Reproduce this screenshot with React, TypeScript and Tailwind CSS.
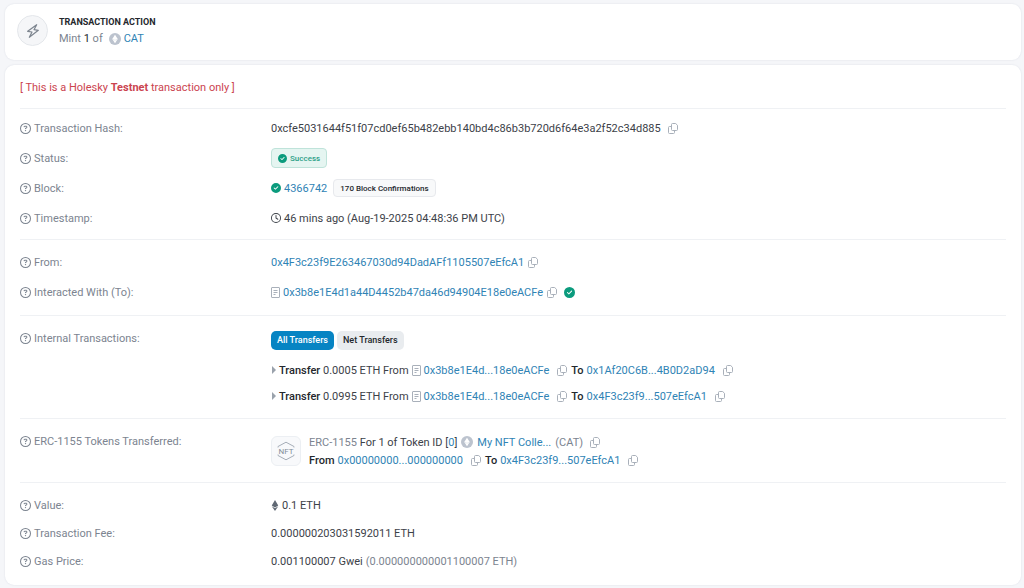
import type { ReactNode } from 'react'
import { FaCircleCheck, FaEthereum, FaRegCircleQuestion, FaRegClock } from 'react-icons/fa6'

const contract = '0x3b8e1E4d...18e0eACFe'

const transfers = [
  { amount: '0.0005 ETH', to: '0x1Af20C6B...4B0D2aD94' },
  { amount: '0.0995 ETH', to: '0x4F3c23f9...507eEfcA1' },
]

function Link({ children }: { children: ReactNode }) {
  return (
    <a href="#" className="text-[#2f83b5] hover:underline">
      {children}
    </a>
  )
}

function CopyButton() {
  return (
    <button type="button" aria-label="Copy" className="shrink-0 text-[#a9b0ba]">
      <svg viewBox="0 0 10 11" className="h-[11px] w-[10px]" fill="none" stroke="currentColor">
        <path d="M4.500.5h3.200l1.800 1.800v4.200a1 1 0 0 1-1 1h-4a1 1 0 0 1-1-1v-5a1 1 0 0 1 1-1z" />
        <path d="M3.500 3.500h-2a1 1 0 0 0-1 1v5a1 1 0 0 0 1 1h4a1 1 0 0 0 1-1v-2" />
      </svg>
    </button>
  )
}

function ContractIcon() {
  return (
    <svg viewBox="0 0 9 11" className="h-[11px] w-[9px] shrink-0 text-[#a9b0ba]" fill="none" stroke="currentColor">
      <rect x=".5" y=".5" width="8" height="10" rx=".5" />
      <path d="M2.500 3.500h4M2.500 5.500h4M2.500 7.500h2" />
    </svg>
  )
}

function TokenIcon() {
  return (
    <svg viewBox="0 0 24 24" className="size-3 shrink-0">
      <circle cx="12" cy="12" r="12" fill="#bcc3ce" />
      <path d="M12 3.500 17.500 12 12 20.500 6.500 12z" fill="#fff" />
      <path d="M6.500 12 12 14.500 17.500 12" fill="none" stroke="#d5dae1" strokeWidth="1" />
    </svg>
  )
}

function Group({ className, children }: { className: string; children: ReactNode }) {
  return <dl className={`border-t border-[#eff1f4] ${className}`}>{children}</dl>
}

function Row({ label, height, children }: { label: string; height: string; children: ReactNode }) {
  return (
    <div className="grid grid-cols-[minmax(0,1fr)_minmax(0,3fr)] gap-x-1.5">
      <dt className={`flex items-center gap-[3px] text-[#7c8490] ${height}`}>
        <FaRegCircleQuestion className="size-[11px] shrink-0" />
        {label}
      </dt>
      <dd className="flex min-w-0 flex-col">{children}</dd>
    </div>
  )
}

export default function App() {
  return (
    <main className="min-h-screen bg-[#f5f6f9] pt-1 pr-[3px] pb-[3px] pl-[5px] font-[Roboto,sans-serif] text-[11px] leading-[17px] text-[#3c4148]">
      <section className="mb-[5px] flex items-center gap-[11px] rounded-[9px] bg-white px-3 pt-[10px] pb-[13px] shadow-[0_0_2px_rgba(30,50,90,0.12)]">
        <div className="flex size-[31px] items-center justify-center rounded-full border border-[#e4e7eb] bg-[#f5f6f8]">
          <svg viewBox="0 0 24 24" className="size-4" fill="none" stroke="#7d858f" strokeWidth="1.8" strokeLinejoin="round">
            <path d="M17.500 2.500 4 12.500l6.500 1L6.500 21.500l13.500-10.500-6.500-1z" />
          </svg>
        </div>
        <div>
          <h1 className="text-[9px] font-bold text-[#24282d]">TRANSACTION ACTION</h1>
          <p className="flex items-center leading-4 text-[#7c8490]">
            <span className="mr-[6px]">
              Mint <span className="text-[#24282d]">1</span> of
            </span>
            <TokenIcon />
            <span className="ml-[3px]">
              <Link>CAT</Link>
            </span>
          </p>
        </div>
      </section>

      <section className="rounded-[9px] bg-white pr-[15px] pb-[10px] pl-[15px] shadow-[0_0_2px_rgba(30,50,90,0.12)]">
        <p className="pt-[14px] pb-3 text-[#cb444f]">
          [ This is a Holesky <strong className="font-bold">Testnet</strong> transaction only ]
        </p>

        <Group className="pt-1 pb-1.5">
          <Row label="Transaction Hash:" height="h-[30px]">
            <div className="flex h-[30px] items-center gap-[7px]">
              0xcfe5031644f51f07cd0ef65b482ebb140bd4c86b3b720d6f64e3a2f52c34d885
              <CopyButton />
            </div>
          </Row>
          <Row label="Status:" height="h-[30px]">
            <div className="flex h-[30px] items-center">
              <span className="flex h-5 items-center gap-[3px] rounded border border-[#bfe3da] bg-[#e5f5f1] px-1.5 text-[8px] font-medium text-[#2ba087]">
                <FaCircleCheck className="size-[9px] text-[#0b9b7d]" />
                Success
              </span>
            </div>
          </Row>
          <Row label="Block:" height="h-[30px]">
            <div className="flex h-[30px] items-center gap-[3px]">
              <FaCircleCheck className="size-[10px] text-[#0b9b7d]" />
              <Link>4366742</Link>
              <span className="ml-[3px] flex h-[18px] items-center rounded border border-[#e7e9ed] bg-[#f8f9fa] px-1.5 text-[8px] font-medium text-[#24282d]">
                170 Block Confirmations
              </span>
            </div>
          </Row>
          <Row label="Timestamp:" height="h-[30px]">
            <div className="flex h-[30px] items-center gap-[3px]">
              <FaRegClock className="size-[10px]" />
              46 mins ago (Aug-19-2025 04:48:36 PM UTC)
            </div>
          </Row>
        </Group>

        <Group className="pt-[7px] pb-2">
          <Row label="From:" height="h-[30px]">
            <div className="flex h-[30px] items-center gap-1">
              <Link>0x4F3c23f9E263467030d94DadAFf1105507eEfcA1</Link>
              <CopyButton />
            </div>
          </Row>
          <Row label="Interacted With (To):" height="h-[30px]">
            <div className="flex h-[30px] items-center gap-[3px]">
              <ContractIcon />
              <Link>0x3b8e1E4d1a44D4452b47da46d94904E18e0eACFe</Link>
              <span className="ml-px flex items-center gap-[7px]">
                <CopyButton />
                <FaCircleCheck className="size-[11px] text-[#0b9b7d]" />
              </span>
            </div>
          </Row>
        </Group>

        <Group className="pt-[7px] pb-[9px]">
          <Row label="Internal Transactions:" height="h-[30px]">
            <div className="mt-2 mb-[7px] flex gap-[3px] text-[9px] font-medium">
              <button type="button" className="h-[19px] rounded-[5px] bg-[#0784c3] px-1.5 text-white">
                All Transfers
              </button>
              <button type="button" className="h-[19px] rounded-[5px] bg-[#e9ecef] px-1.5 text-[#24282d]">
                Net Transfers
              </button>
            </div>
            {transfers.map(({ amount, to }) => (
              <div key={to} className="flex h-[26px] items-center gap-[3px]">
                <svg viewBox="0 0 5 8" className="h-2 w-[5px] shrink-0 fill-[#9aa2ac]">
                  <path d="M1 0v8l4-4z" />
                </svg>
                <span>
                  <strong className="font-medium text-[#24282d]">Transfer</strong> {amount} From
                </span>
                <ContractIcon />
                <Link>{contract}</Link>
                <span className="mr-px ml-[5px] flex">
                  <CopyButton />
                </span>
                <strong className="font-medium text-[#24282d]">To</strong>
                <Link>{to}</Link>
                <span className="ml-[5px] flex">
                  <CopyButton />
                </span>
              </div>
            ))}
          </Row>
        </Group>

        <Group className="pt-[7px] pb-[13px]">
          <Row label="ERC-1155 Tokens Transferred:" height="h-[30px]">
            <div className="mt-[7px] flex items-center gap-2">
              <div className="flex size-[30px] items-center justify-center rounded-md border border-[#eceff3] bg-[#f8f9fb]">
                <svg viewBox="0 0 20 20" className="size-5" fill="none" stroke="#a6aeb8">
                  <path d="M2 6.500V5.500L10 1.200l8 4.300v1M2 13.500v1l8 4.300 8-4.300v-1" />
                  <text x="10" y="13" textAnchor="middle" fontSize="8" fill="#848e9a" stroke="none">
                    NFT
                  </text>
                </svg>
              </div>
              <div>
                <div className="flex h-[18px] items-center gap-1">
                  <span>
                    <span className="text-[#7c8490]">ERC-1155</span> For 1 of Token ID [<Link>0</Link>]
                  </span>
                  <TokenIcon />
                  <Link>My NFT Colle...</Link>
                  <span className="text-[#7c8490]">(CAT)</span>
                  <span className="ml-[3px] flex">
                    <CopyButton />
                  </span>
                </div>
                <div className="flex h-[18px] items-center gap-[3px]">
                  <strong className="font-medium text-[#24282d]">From</strong>
                  <Link>0x00000000...000000000</Link>
                  <span className="mr-px ml-[5px] flex">
                    <CopyButton />
                  </span>
                  <strong className="font-medium text-[#24282d]">To</strong>
                  <Link>0x4F3c23f9...507eEfcA1</Link>
                  <span className="ml-[5px] flex">
                    <CopyButton />
                  </span>
                </div>
              </div>
            </div>
          </Row>
        </Group>

        <Group className="pt-2">
          <Row label="Value:" height="h-7">
            <div className="flex h-7 items-center gap-[3px]">
              <FaEthereum className="h-[11px] w-2 text-[#5f6873]" />
              0.1 ETH
            </div>
          </Row>
          <Row label="Transaction Fee:" height="h-7">
            <div className="flex h-7 items-center">0.000000203031592011 ETH</div>
          </Row>
          <Row label="Gas Price:" height="h-7">
            <div className="flex h-7 items-center gap-[3px]">
              0.001100007 Gwei <span className="text-[#7c8490]">(0.000000000001100007 ETH)</span>
            </div>
          </Row>
        </Group>
      </section>
    </main>
  )
}
